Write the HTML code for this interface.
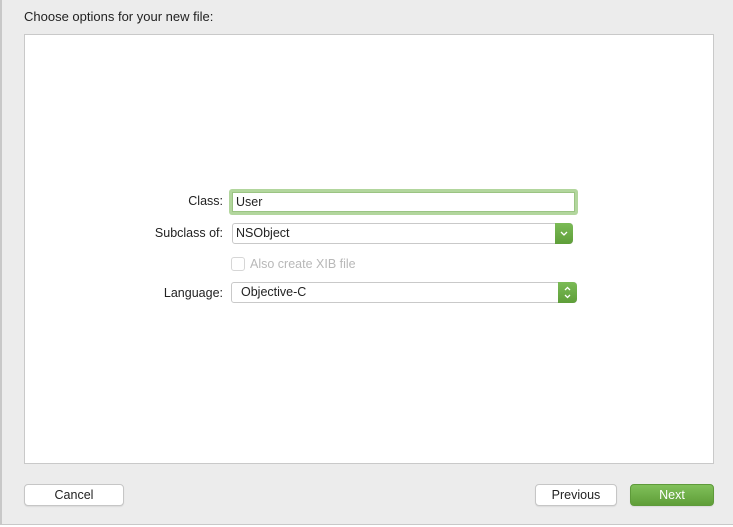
<!DOCTYPE html>
<html><head><meta charset="utf-8"><style>
*{margin:0;padding:0;box-sizing:border-box}
body{width:733px;height:527px;background:#ececec;font-family:"Liberation Sans",sans-serif;font-size:12.5px;color:#222;position:relative;overflow:hidden}
.abs{position:absolute}
.lbl{position:absolute;text-align:right;width:100px;color:#222}
.btn{position:absolute;height:22px;background:#fff;border:1px solid #c6c6c6;border-radius:4px;text-align:center;line-height:20px;box-shadow:0 1px 1px rgba(0,0,0,.08)}
.grn{background:linear-gradient(#7bbb56,#5e9e39);border-radius:0 4px 4px 0}
</style></head><body>
<div class="abs" style="left:0;top:0;width:2px;height:527px;background:#c8c8c8"></div>
<div class="abs" style="left:0;top:524px;width:733px;height:3px;background:#fff;border-top:1px solid #c8c8c8"></div>
<div class="abs" style="left:24px;top:9px;font-size:13px;color:#222">Choose options for your new file:</div>
<div class="abs" style="left:24px;top:34px;width:690px;height:430px;background:#fff;border:1px solid #c9c9c9"></div>

<div class="lbl" style="left:123px;top:194px">Class:</div>
<div class="abs" style="left:229px;top:189px;width:349px;height:26px;border-radius:3px;background:#b2d69d"></div>
<div class="abs" style="left:232px;top:192px;width:343px;height:20px;background:#fff;border:1px solid #9bc483;padding-left:3px;line-height:18px">User</div>

<div class="lbl" style="left:123px;top:226px">Subclass of:</div>
<div class="abs" style="left:232px;top:223px;width:341px;height:21px;background:#fff;border:1px solid #c9c9c9;border-radius:3px;line-height:19px;padding-left:3px">NSObject</div>
<div class="abs grn" style="left:555px;top:223px;width:18px;height:21px"><svg width="18" height="21"><path d="M6 9l3 3 3-3" stroke="#fff" stroke-width="1.3" fill="none"/></svg></div>

<div class="abs" style="left:231px;top:257px;width:14px;height:14px;border:1px solid #d6d6d6;border-radius:3px;background:#fff"></div>
<div class="abs" style="left:250px;top:257px;color:#b8b8b8">Also create XIB file</div>

<div class="lbl" style="left:123px;top:286px">Language:</div>
<div class="abs" style="left:231px;top:282px;width:346px;height:21px;background:#fff;border:1px solid #c9c9c9;border-radius:3px;line-height:19px;padding-left:9px">Objective-C</div>
<div class="abs grn" style="left:558px;top:282px;width:19px;height:21px"><svg width="19" height="21"><path d="M7 8l2.5-2.5L12 8M7 13l2.5 2.5L12 13" stroke="#fff" stroke-width="1.3" fill="none"/></svg></div>

<div class="btn" style="left:24px;top:484px;width:100px">Cancel</div>
<div class="btn" style="left:535px;top:484px;width:82px">Previous</div>
<div class="btn" style="left:630px;top:484px;width:84px;background:linear-gradient(#80c05a,#5f9e38);border-color:#5e9a3a;color:#fff">Next</div>
</body></html>
